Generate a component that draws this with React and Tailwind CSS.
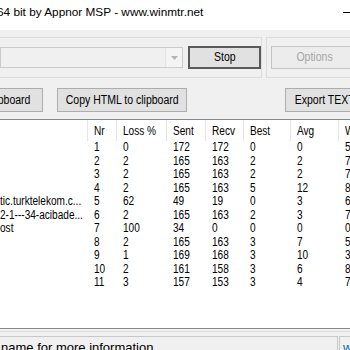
import React from "react";

const rows = [
  ["", 1, 0, 172, 172, 0, 0, 5],
  ["", 2, 2, 165, 163, 2, 2, 7],
  ["", 3, 2, 165, 163, 2, 2, 7],
  ["", 4, 2, 165, 163, 5, 12, 8],
  ["tic.turktelekom.c...", 5, 62, 49, 19, 0, 3, 6],
  ["2-1---34-acibade...", 6, 2, 165, 163, 2, 3, 7],
  ["ost", 7, 100, 34, 0, 0, 0, 0],
  ["", 8, 2, 165, 163, 3, 7, 5],
  ["", 9, 1, 169, 168, 3, 10, 3],
  ["", 10, 2, 161, 158, 3, 6, 8],
  ["", 11, 3, 157, 153, 3, 4, 7],
];

const widths = ["w-[88px]", "w-[29px]", "w-[50px]", "w-[39px]", "w-[38px]", "w-[47px]", "w-[48px]", "w-[40px]"];
const headers = ["", "Nr", "Loss %", "Sent", "Recv", "Best", "Avg", "Worst"];

const sans = { fontFamily: '"Liberation Sans", Arial, sans-serif' };

function N({ children }) {
  return <span className="inline-block origin-left scale-x-[0.84]">{children}</span>;
}
function NC({ children }) {
  return <span className="inline-block origin-center scale-x-[0.84]">{children}</span>;
}

export default function App() {
  return (
    <div className="w-[350px] h-[350px] overflow-hidden bg-[#f0f0f0] flex flex-col text-black" style={sans}>
      {/* title bar */}
      <div className="h-[30px] bg-white flex items-start justify-between shrink-0">
        <div className="mt-[4px] ml-[-3px] whitespace-nowrap text-[11.8px] text-black">
          64 bit by Appnor MSP - www.winmtr.net
        </div>
        <div className="w-[10px] h-px bg-black mt-[12px] mr-[-3px]" />
      </div>

      {/* top group row */}
      <div className="flex mt-[7px] h-[41px] shrink-0">
        <div className="w-[269px] border-y border-r border-[#dcdcdc] flex items-center">
          <div className="w-[183px] h-[21px] border border-[#cccccc] bg-[#f0f0f0] flex justify-end items-stretch">
            <div className="w-[17px] border-l border-[#e3e3e3] bg-[#f4f4f4] flex items-center justify-center">
              <svg width="7" height="4" viewBox="0 0 7 4"><path d="M0 0h7L3.5 4z" fill="#b4b4b4" /></svg>
            </div>
          </div>
          <div className="ml-[5px] w-[73px] h-[23px] border-2 border-[#5a5a5a] bg-[#e1e1e1] flex items-center justify-center text-[12.5px] whitespace-nowrap">
            <NC>Stop</NC>
          </div>
        </div>
        <div className="ml-[4px] w-[100px] border-y border-l border-[#dcdcdc] flex items-center">
          <div className="ml-[4px] w-[88px] shrink-0 h-[23px] border border-[#c4c4c4] bg-[#ececec] flex items-center justify-center text-[12.5px] text-[#a6a6a6] whitespace-nowrap">
            <NC>Options</NC>
          </div>
        </div>
      </div>

      {/* button row */}
      <div className="flex mt-[10px] h-[24px] shrink-0 text-[12.5px]">
        <div className="ml-[-100px] w-[143px] shrink-0 border border-[#adadad] bg-[#e1e1e1] flex items-center justify-end pr-[12px] whitespace-nowrap">
          <span className="inline-block origin-right scale-x-[0.84]">Copy Text to clipboard</span>
        </div>
        <div className="ml-[14px] w-[130px] shrink-0 border border-[#adadad] bg-[#e1e1e1] flex items-center justify-center whitespace-nowrap">
          <NC>Copy HTML to clipboard</NC>
        </div>
        <div className="ml-[98px] w-[80px] shrink-0 border border-[#adadad] bg-[#e1e1e1] flex items-center justify-center whitespace-nowrap">
          <NC>Export TEXT</NC>
        </div>
      </div>

      {/* list */}
      <div className="mt-[7px] h-[210px] shrink-0 border-y border-[#828790] bg-white flex flex-col text-[12px]">
        <div className="h-[21px] flex shrink-0">
          {headers.map((h, i) => (
            <div key={i} className={`${widths[i]} shrink-0 border-r border-[#e5e5e5] pl-[6px] flex items-center whitespace-nowrap overflow-hidden`}>
              <N>{h}</N>
            </div>
          ))}
        </div>
        {rows.map((r, ri) => (
          <div key={ri} className="h-[13.5px] flex shrink-0 leading-[13.5px]">
            {r.map((c, ci) => (
              <div key={ci} className={`${widths[ci]} shrink-0 whitespace-nowrap overflow-hidden ${ci === 0 ? "pl-0" : "pl-[6px]"}`}>
                <N>{c}</N>
              </div>
            ))}
          </div>
        ))}
      </div>

      {/* status bar */}
      <div className="mt-[2px] border-t border-[#dadada] pt-[4px] flex flex-1 text-[13px]">
        <div className="w-[338px] shrink-0 border-t border-r border-[#c8c8c8] pl-[1px] pt-[1px] whitespace-nowrap overflow-hidden">
          name for more information.
        </div>
        <div className="ml-[1px] border-t border-l border-[#c8c8c8] pl-[3px] pt-[1px] text-[#0066cc] whitespace-nowrap">
          www.winmtr.net
        </div>
      </div>
    </div>
  );
}
